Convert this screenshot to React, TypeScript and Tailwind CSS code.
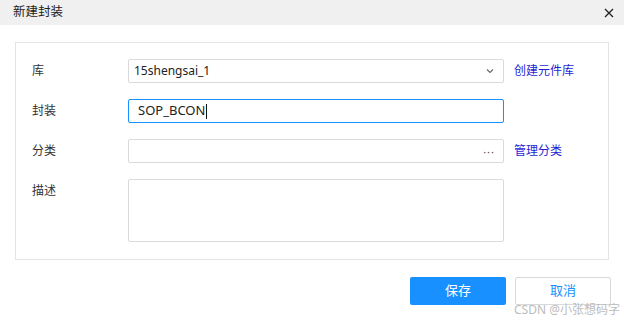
import React from "react";

const font = { fontFamily: '"Noto Sans", "Noto Sans CJK SC", sans-serif' };

function Row({ label, children, link }: { label: string; children: React.ReactNode; link?: string }) {
  return (
    <div className="flex items-center h-6">
      <div className="w-[112px] pl-[16px] text-[12px] text-[#333]">{label}</div>
      <div className="w-[376px] h-6">{children}</div>
      {link && <a className="ml-[10px] text-[12px] text-[#1f1fd6]">{link}</a>}
    </div>
  );
}

export default function App() {
  return (
    <div className="w-[624px] h-[320px] bg-white relative overflow-hidden" style={font}>
      <div className="h-[25px] bg-[#f0f0f0] flex items-center justify-between pl-[13px] pr-[10px]">
        <span className="text-[12.5px] text-[#222]">新建封装</span>
        <svg width="10" height="10" viewBox="0 0 10 10">
          <path d="M1 1L9 9M9 1L1 9" stroke="#222" strokeWidth="1.3" />
        </svg>
      </div>

      <div className="mx-[15px] mt-[17px] h-[218px] border border-[#e4e4e4] pt-[16px] flex flex-col gap-4">
        <Row label="库" link="创建元件库">
          <div className="h-6 border border-[#d9d9d9] rounded-[2px] flex items-center justify-between pl-[5px] pr-[9px]">
            <span className="text-[12px] text-[#222]">15shengsai_1</span>
            <svg width="8" height="6" viewBox="0 0 8 6">
              <path d="M1 1.5L4 4.5L7 1.5" stroke="#666" strokeWidth="1.1" fill="none" />
            </svg>
          </div>
        </Row>
        <Row label="封装">
          <div className="h-6 border border-[#1890ff] rounded-[2px] flex items-center pl-[9px]">
            <span className="text-[13px] text-[#222]">SOP_BCON</span>
            <span className="w-px h-[15px] bg-[#111] ml-[1px]" />
          </div>
        </Row>
        <Row label="分类" link="管理分类">
          <div className="h-6 border border-[#d9d9d9] rounded-[2px] flex items-center justify-end pr-[8px]">
            <span className="text-[11px] text-[#555] tracking-[1px] leading-none">···</span>
          </div>
        </Row>
        <div className="flex items-start">
          <div className="w-[112px] pl-[16px] text-[12px] text-[#333] pt-[3px]">描述</div>
          <div className="w-[376px] h-[63px] border border-[#d9d9d9] rounded-[2px]" />
        </div>
      </div>

      <div className="flex justify-end gap-[9px] mt-[17px] mr-[13px]">
        <button className="w-[96px] h-[28px] bg-[#1890ff] rounded-[2px] text-white text-[13px]">保存</button>
        <button className="w-[96px] h-[28px] border border-[#d9d9d9] rounded-[2px] text-[#1890ff] text-[13px]">取消</button>
      </div>
      <div className="absolute right-[4px] bottom-[4px] text-[12px] text-[#bcbcbc] leading-none">CSDN @小张想码字</div>
    </div>
  );
}
